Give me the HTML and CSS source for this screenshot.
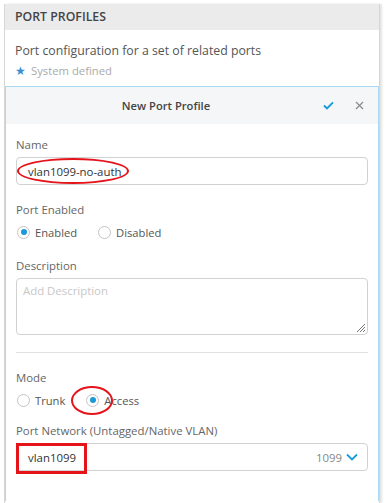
FILE: index.html
```html
<!DOCTYPE html>
<html lang="en">
<head>
  <meta charset="UTF-8" />
  <title>Port Profiles</title>
  <link rel="stylesheet" href="styles.css">
</head>
<body>
  <div class="panel">
    <div class="panel-header">PORT PROFILES</div>
    <div class="panel-intro">
      <p class="intro-text">Port configuration for a set of related ports</p>
      <p class="legend"><span class="star">&#9733;</span> System defined</p>
    </div>

    <div class="card">
      <div class="card-header">
        <span class="card-title">New Port Profile</span>
        <span class="card-actions">
          <svg class="icon-check" width="11" height="9" viewBox="0 0 11 9"><path d="M1 4.6 L4 7.4 L10 1.4" fill="none" stroke="#1a9ad6" stroke-width="2"/></svg>
          <svg class="icon-close" width="9" height="9" viewBox="0 0 9 9"><path d="M1 1 L8 8 M8 1 L1 8" fill="none" stroke="#8a8a8a" stroke-width="1.2"/></svg>
        </span>
      </div>

      <div class="card-body">
        <div class="field">
          <label class="field-label">Name</label>
          <div class="input">
            <span class="value">vlan1099-no-auth</span>
            <span class="mark-ellipse mark-name"></span>
          </div>
        </div>

        <div class="field">
          <label class="field-label">Port Enabled</label>
          <div class="radios">
            <span class="radio checked"></span><span class="radio-text">Enabled</span>
            <span class="radio"></span><span class="radio-text">Disabled</span>
          </div>
        </div>

        <div class="field">
          <label class="field-label">Description</label>
          <div class="textarea">
            <span class="placeholder">Add Description</span>
            <svg class="resize" width="10" height="10" viewBox="0 0 10 10"><path d="M9 1 L1 9 M9 4 L4 9 M9 7 L7 9" stroke="#777" stroke-width="1"/></svg>
          </div>
        </div>

        <div class="divider"></div>

        <div class="field field-tight">
          <label class="field-label">Mode</label>
          <div class="radios">
            <span class="radio"></span><span class="radio-text">Trunk</span>
            <span class="radio checked"></span><span class="radio-text">Access</span>
            <span class="mark-ellipse mark-access"></span>
          </div>
        </div>

        <div class="field">
          <label class="field-label">Port Network (Untagged/Native VLAN)</label>
          <div class="input select">
            <span class="value">vlan1099</span>
            <span class="select-right">1099
              <svg width="12" height="8" viewBox="0 0 12 8"><path d="M1 1.5 L6 6.5 L11 1.5" fill="none" stroke="#1a9ad6" stroke-width="1.8"/></svg>
            </span>
            <span class="mark-box"></span>
          </div>
        </div>
      </div>
    </div>
  </div>
</body>
</html>
```

FILE: styles.css
```css
body {
  margin: 0;
  background: #fff;
  font-family: "Open Sans", "Noto Sans", sans-serif;
  color: #555;
  overflow: hidden;
}
.panel {
  margin: 4px 5px 0 4px;
  height: 499px;
  border-left: 1px solid #d6d6d6;
  border-right: 1px solid #d6d6d6;
  box-shadow: 2px 0 2px #e4e4e4;
}
.panel-header {
  background: #ebebeb;
  height: 26px;
  line-height: 26px;
  padding-left: 10px;
  font-size: 12.3px;
  font-weight: 600;
  color: #444;
}
.panel-intro {
  padding: 12px 10px 8px;
}
.intro-text {
  margin: 0;
  font-size: 12.3px;
  line-height: 18px;
  color: #555;
}
.legend {
  margin: 3px 0 0;
  font-size: 11.3px;
  line-height: 15px;
  color: #aaa;
}
.star {
  color: #3a8fd0;
  font-size: 12px;
  margin-right: 2px;
}
.card {
  border: 1px solid #a9daf3;
  border-bottom: none;
  height: 414px;
}
.card-header {
  background: #f4f6f8;
  height: 37px;
  display: flex;
  align-items: center;
  justify-content: center;
  padding-right: 52px;
  position: relative;
}
.card-title {
  font-size: 11.2px;
  font-weight: 600;
  color: #444;
}
.card-actions {
  position: absolute;
  right: 14px;
  top: 14px;
  display: flex;
  gap: 21px;
  align-items: center;
}
.card-body {
  padding: 13px 10px 0;
}
.field {
  margin-bottom: 17px;
}
.field-tight {
  margin-bottom: 14px;
}
.field-label {
  display: block;
  font-size: 11.4px;
  line-height: 16px;
  color: #666;
  margin-bottom: 4px;
}
.input {
  position: relative;
  height: 26px;
  border: 1px solid #d2d2d2;
  border-radius: 4px;
  display: flex;
  align-items: center;
  padding: 0 11px;
  font-size: 11.4px;
  color: #333;
}
.select {
  justify-content: space-between;
}
.select-right {
  color: #888;
  display: flex;
  align-items: center;
  gap: 4px;
  margin-right: -2px;
}
.radios {
  position: relative;
  display: flex;
  align-items: center;
  height: 18px;
  margin-top: 5px;
  font-size: 11.2px;
  color: #555;
}
.radio {
  width: 11px;
  height: 11px;
  border: 1px solid #c4c4c4;
  border-radius: 50%;
  margin-left: 1px;
  margin-right: 5px;
  position: relative;
}
.radio.checked::after {
  content: "";
  position: absolute;
  left: 2.5px;
  top: 2.5px;
  width: 6px;
  height: 6px;
  border-radius: 50%;
  background: #1a9ad6;
}
.radio-text {
  margin-right: 20px;
}
.textarea {
  position: relative;
  height: 57px;
  border: 1px solid #d2d2d2;
  border-radius: 4px;
  padding: 4px 6px;
  box-sizing: border-box;
  font-size: 11.4px;
}
.placeholder {
  color: #c8c8c8;
}
.resize {
  position: absolute;
  right: 1px;
  bottom: 1px;
}
.divider {
  height: 1px;
  background: #e2e2e2;
  margin: 0 0 17px;
}
.mark-ellipse {
  position: absolute;
  border: 2px solid #e5141b;
  border-radius: 50%;
  box-sizing: border-box;
}
.mark-name {
  left: 0;
  top: 0;
  width: 112px;
  height: 26px;
}
.mark-access {
  left: 55px;
  top: -5px;
  width: 42px;
  height: 29px;
}
.mark-box {
  position: absolute;
  left: -1px;
  top: -1px;
  width: 71px;
  height: 31px;
  box-sizing: border-box;
  border: 3px solid #e5141b;
}
```
